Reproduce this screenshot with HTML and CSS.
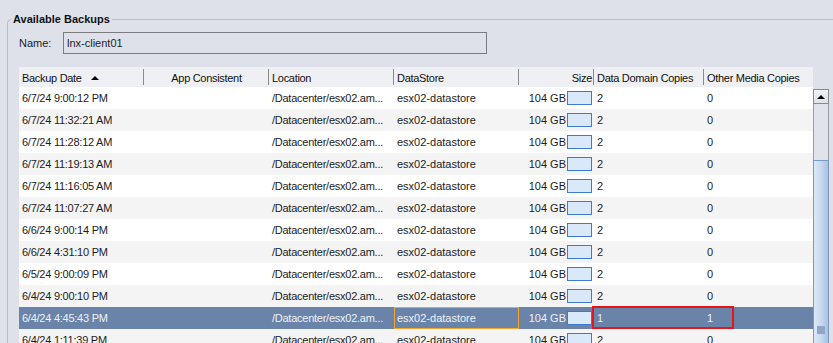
FILE: index.html
```html
<!DOCTYPE html>
<html>
<head>
<meta charset="utf-8">
<link rel="stylesheet" href="styles.css">
</head>
<body>
<fieldset class="panel">
  <legend class="panel-title">Available Backups</legend>
  <div class="panel-body">
    <div class="name-row">
      <span class="name-label">Name:</span>
      <div class="name-box">lnx-client01</div>
    </div>
    <div class="grid">
      <div class="grid-head">
        <div class="hc c1">Backup Date<span class="sort-up"></span></div>
        <div class="hc c2 center">App Consistent</div>
        <div class="hc c3">Location</div>
        <div class="hc c4">DataStore</div>
        <div class="hc c5 right">Size</div>
        <div class="hc c6">Data Domain Copies</div>
        <div class="hc c7 last">Other Media Copies</div>
      </div>
      <div class="grid-main">
        <div class="rows">
          <div class="row"><div class="c c1 date">6/7/24 9:00:12 PM</div><div class="c c2"></div><div class="c c3 loc">/Datacenter/esx02.am...</div><div class="c c4">esx02-datastore</div><div class="c c5 size">104 GB<span class="bar"></span></div><div class="c c6">2</div><div class="c c7">0</div></div>
          <div class="row"><div class="c c1 date">6/7/24 11:32:21 AM</div><div class="c c2"></div><div class="c c3 loc">/Datacenter/esx02.am...</div><div class="c c4">esx02-datastore</div><div class="c c5 size">104 GB<span class="bar"></span></div><div class="c c6">2</div><div class="c c7">0</div></div>
          <div class="row"><div class="c c1 date">6/7/24 11:28:12 AM</div><div class="c c2"></div><div class="c c3 loc">/Datacenter/esx02.am...</div><div class="c c4">esx02-datastore</div><div class="c c5 size">104 GB<span class="bar"></span></div><div class="c c6">2</div><div class="c c7">0</div></div>
          <div class="row"><div class="c c1 date">6/7/24 11:19:13 AM</div><div class="c c2"></div><div class="c c3 loc">/Datacenter/esx02.am...</div><div class="c c4">esx02-datastore</div><div class="c c5 size">104 GB<span class="bar"></span></div><div class="c c6">2</div><div class="c c7">0</div></div>
          <div class="row"><div class="c c1 date">6/7/24 11:16:05 AM</div><div class="c c2"></div><div class="c c3 loc">/Datacenter/esx02.am...</div><div class="c c4">esx02-datastore</div><div class="c c5 size">104 GB<span class="bar"></span></div><div class="c c6">2</div><div class="c c7">0</div></div>
          <div class="row"><div class="c c1 date">6/7/24 11:07:27 AM</div><div class="c c2"></div><div class="c c3 loc">/Datacenter/esx02.am...</div><div class="c c4">esx02-datastore</div><div class="c c5 size">104 GB<span class="bar"></span></div><div class="c c6">2</div><div class="c c7">0</div></div>
          <div class="row"><div class="c c1 date">6/6/24 9:00:14 PM</div><div class="c c2"></div><div class="c c3 loc">/Datacenter/esx02.am...</div><div class="c c4">esx02-datastore</div><div class="c c5 size">104 GB<span class="bar"></span></div><div class="c c6">2</div><div class="c c7">0</div></div>
          <div class="row"><div class="c c1 date">6/6/24 4:31:10 PM</div><div class="c c2"></div><div class="c c3 loc">/Datacenter/esx02.am...</div><div class="c c4">esx02-datastore</div><div class="c c5 size">104 GB<span class="bar"></span></div><div class="c c6">2</div><div class="c c7">0</div></div>
          <div class="row"><div class="c c1 date">6/5/24 9:00:09 PM</div><div class="c c2"></div><div class="c c3 loc">/Datacenter/esx02.am...</div><div class="c c4">esx02-datastore</div><div class="c c5 size">104 GB<span class="bar"></span></div><div class="c c6">2</div><div class="c c7">0</div></div>
          <div class="row"><div class="c c1 date">6/4/24 9:00:10 PM</div><div class="c c2"></div><div class="c c3 loc">/Datacenter/esx02.am...</div><div class="c c4">esx02-datastore</div><div class="c c5 size">104 GB<span class="bar"></span></div><div class="c c6">2</div><div class="c c7">0</div></div>
          <div class="row selected"><div class="c c1 date">6/4/24 4:45:43 PM</div><div class="c c2"></div><div class="c c3 loc">/Datacenter/esx02.am...</div><div class="c c4 focus">esx02-datastore</div><div class="c c5 size">104 GB<span class="bar"></span></div><div class="c c6">1</div><div class="c c7">1</div><div class="highlight-box"></div></div>
          <div class="row"><div class="c c1 date">6/4/24 1:11:39 PM</div><div class="c c2"></div><div class="c c3 loc">/Datacenter/esx02.am...</div><div class="c c4">esx02-datastore</div><div class="c c5 size">104 GB<span class="bar"></span></div><div class="c c6">2</div><div class="c c7">0</div></div>
        </div>
        <div class="vscroll">
          <div class="vs-up"><span class="vs-arrow"></span></div>
          <div class="vs-track"></div>
          <div class="vs-thumb"><span class="vs-grip"></span></div>
        </div>
      </div>
    </div>
  </div>
</fieldset>
</body>
</html>
```
FILE: styles.css
```css
html, body {
  margin: 0;
  padding: 0;
  background: #dfe1ea;
  overflow: hidden;
  height: 343px;
}
body {
  font-family: "Liberation Sans", Arial, sans-serif;
  font-size: 11px;
  color: #1c1c24;
}
.panel {
  margin: 13px -40px 0 7px;
  padding: 0;
  border: 1px solid #babcc6;
  border-radius: 4px;
  min-width: 0;
}
.panel-title {
  margin-left: 3px;
  padding: 0 2px;
  font-weight: bold;
  font-size: 11px;
  line-height: 13px;
  color: #111;
}
.panel-body {
  padding: 6px 0 0 11px;
}
.name-row {
  display: flex;
  align-items: center;
}
.name-label {
  width: 44px;
  color: #1c1c24;
}
.name-box {
  box-sizing: border-box;
  width: 424px;
  height: 22px;
  border: 1px solid #7c7c80;
  padding: 0 3px;
  line-height: 20px;
  color: #1c1c24;
}
.grid {
  margin-top: 13px;
}
.grid-head {
  display: flex;
  width: 794px;
  height: 20px;
  background: #eff0f4;
}
.hc {
  box-sizing: border-box;
  flex: none;
  line-height: 23px;
  height: 20px;
  padding: 0 3px;
  color: #111;
  white-space: nowrap;
  letter-spacing: -0.3px;
  background-image: linear-gradient(#8a8a8e, #8a8a8e), linear-gradient(#ffffff, #ffffff);
  background-repeat: no-repeat;
  background-size: 1px 16px, 1px 16px;
  background-position: right 0 center, right -1px center;
}
.hc.last {
  background-image: none;
}
.center { text-align: center; }
.right { text-align: right; }
.hc.right { padding-right: 2px; }
.sort-up {
  display: inline-block;
  width: 0;
  height: 0;
  border-left: 4px solid transparent;
  border-right: 4px solid transparent;
  border-bottom: 4px solid #000;
  margin-left: 9px;
  vertical-align: 2px;
}
.c1 { width: 125px; }
.c2 { width: 125px; }
.c3 { width: 125px; }
.c4 { width: 125px; }
.c5 { width: 75px; }
.c6 { width: 110px; }
.c7 { width: 109px; }
.grid-main {
  display: flex;
  align-items: flex-start;
}
.rows {
  width: 794px;
  background: #fff;
}
.row {
  position: relative;
  display: flex;
  height: 22px;
  background: #fff;
}
.row:nth-child(even) {
  background: #f4f4f5;
}
.c {
  box-sizing: border-box;
  flex: none;
  padding: 0 3px;
  line-height: 22px;
  white-space: nowrap;
  overflow: hidden;
}
.date, .loc {
  letter-spacing: -0.25px;
}
.size {
  display: flex;
  justify-content: flex-end;
  align-items: flex-start;
  padding-right: 2px;
}
.bar {
  box-sizing: border-box;
  width: 25px;
  height: 14px;
  margin-top: 4px;
  margin-left: 1px;
  border: 1px solid #3d7bd3;
  background: #d9e9f9;
}
.row.selected {
  background: #6983a9;
  color: #eef1f6;
}
.focus {
  box-shadow: inset 0 0 0 1px #f2a531;
}
.highlight-box {
  position: absolute;
  left: 573px;
  top: -1px;
  width: 142px;
  height: 23px;
  box-sizing: border-box;
  border: 2px solid #e8141c;
}
.vscroll {
  width: 16px;
  margin-top: 2px;
  display: flex;
  flex-direction: column;
}
.vs-up {
  box-sizing: border-box;
  height: 15px;
  border: 1px solid #8a8b90;
  background: linear-gradient(#f2f3f7, #dfe1e8);
  display: flex;
  align-items: center;
  justify-content: center;
}
.vs-arrow {
  width: 0;
  height: 0;
  border-left: 4px solid transparent;
  border-right: 4px solid transparent;
  border-bottom: 4px solid #000;
}
.vs-track {
  box-sizing: border-box;
  height: 56px;
  border-left: 1px solid #9c9da2;
  border-right: 1px solid #9c9da2;
  background: #e1e3ea;
}
.vs-thumb {
  box-sizing: border-box;
  height: 200px;
  border: 1px solid #7a98c6;
  background: linear-gradient(to right, #dde8f6, #c4d5ec 60%, #aac0df);
  display: flex;
  flex-direction: column;
  justify-content: flex-end;
  align-items: center;
}
.vs-grip {
  width: 8px;
  height: 8px;
  margin-bottom: 25px;
  background-image: radial-gradient(circle, #8ea6c8 0.8px, transparent 1px);
  background-size: 2px 2px;
}
```
